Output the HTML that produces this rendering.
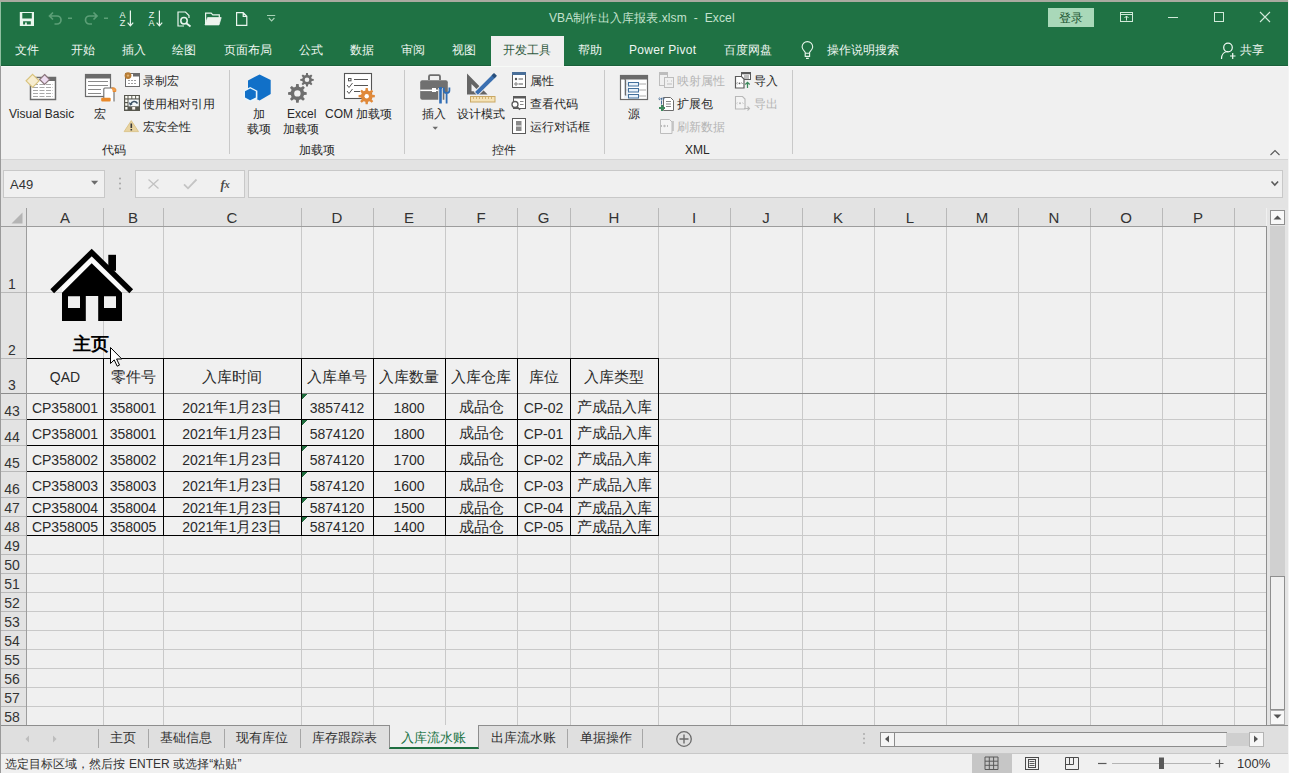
<!DOCTYPE html><html><head><meta charset="utf-8"><title>Excel</title><style>
html,body{margin:0;padding:0;width:1289px;height:773px;overflow:hidden;background:#f0f0f0;font-family:"Liberation Sans",sans-serif;}
.a{position:absolute;white-space:nowrap;line-height:1;}
.ui{font-size:12px;color:#282828;}
.tab{font-size:12px;color:#eef6f1;top:44px;}
.cj{font-size:14.67px;position:relative;top:0;}
.cell{position:absolute;font-size:14px;color:#2a2a2a;text-align:center;display:flex;align-items:center;justify-content:center;white-space:nowrap;}
svg{position:absolute;overflow:visible;}
</style></head><body>
<div class="a" style="left:0;top:0;width:1289px;height:2px;background:#a9aaa0"></div>
<div class="a" style="left:0;top:2px;width:1288px;height:64px;background:#1f7244"></div>
<div class="a" style="left:0;top:2px;width:1px;height:64px;background:#8fbfa0"></div>
<div class="a" style="left:1288px;top:0;width:1px;height:773px;background:#f4f4f4"></div>
<div class="a" style="left:549px;top:12px;font-size:12px;letter-spacing:.12px;color:#c4e2ce">VBA制作出入库报表.xlsm&nbsp; -&nbsp; Excel</div>
<div class="a" style="left:1048px;top:8px;width:46px;height:19px;background:#a9d8b9;"></div>
<div class="a" style="left:1059px;top:12px;font-size:12px;color:#1d5633">登录</div>
<div class="a tab" style="left:15px">文件</div>
<div class="a tab" style="left:71px">开始</div>
<div class="a tab" style="left:122px">插入</div>
<div class="a tab" style="left:172px">绘图</div>
<div class="a tab" style="left:224px">页面布局</div>
<div class="a tab" style="left:299px">公式</div>
<div class="a tab" style="left:350px">数据</div>
<div class="a tab" style="left:401px">审阅</div>
<div class="a tab" style="left:452px">视图</div>
<div class="a tab" style="left:578px">帮助</div>
<div class="a tab" style="left:629px"><span style="letter-spacing:.3px">Power Pivot</span></div>
<div class="a tab" style="left:724px">百度网盘</div>
<div class="a tab" style="left:827px">操作说明搜索</div>
<div class="a tab" style="left:1240px">共享</div>
<div class="a" style="left:491px;top:36px;width:73px;height:30px;background:#f0f0f0"></div>
<div class="a tab" style="left:503px;color:#2f5a3e">开发工具</div>
<div class="a" style="left:1px;top:66px;width:1287px;height:93px;background:#f0f0f0;border-bottom:1px solid #d5d5d5"></div>
<div class="a" style="left:229px;top:70px;width:1px;height:84px;background:#c9c9c9"></div>
<div class="a" style="left:404px;top:70px;width:1px;height:84px;background:#c9c9c9"></div>
<div class="a" style="left:604px;top:70px;width:1px;height:84px;background:#c9c9c9"></div>
<div class="a" style="left:792px;top:70px;width:1px;height:84px;background:#c9c9c9"></div>
<div class="a ui" style="left:9px;top:108px;">Visual Basic</div>
<div class="a ui" style="left:94px;top:108px;">宏</div>
<div class="a ui" style="left:143px;top:75px;">录制宏</div>
<div class="a ui" style="left:143px;top:98px;">使用相对引用</div>
<div class="a ui" style="left:143px;top:121px;">宏安全性</div>
<div class="a ui" style="left:102px;top:144px;">代码</div>
<div class="a ui" style="left:253px;top:108px;">加</div>
<div class="a ui" style="left:247px;top:123px;">载项</div>
<div class="a ui" style="left:287px;top:108px;">Excel</div>
<div class="a ui" style="left:283px;top:123px;">加载项</div>
<div class="a ui" style="left:325px;top:108px;">COM 加载项</div>
<div class="a ui" style="left:299px;top:144px;">加载项</div>
<div class="a ui" style="left:422px;top:108px;">插入</div>
<div class="a ui" style="left:457px;top:108px;">设计模式</div>
<div class="a ui" style="left:530px;top:75px;">属性</div>
<div class="a ui" style="left:530px;top:98px;">查看代码</div>
<div class="a ui" style="left:530px;top:121px;">运行对话框</div>
<div class="a ui" style="left:492px;top:144px;">控件</div>
<div class="a ui" style="left:628px;top:108px;">源</div>
<div class="a ui" style="left:677px;top:98px;">扩展包</div>
<div class="a ui" style="left:754px;top:75px;">导入</div>
<div class="a ui" style="left:685px;top:144px;">XML</div>
<div class="a ui" style="left:677px;top:75px;color:#b4b4b4">映射属性</div>
<div class="a ui" style="left:677px;top:121px;color:#b4b4b4">刷新数据</div>
<div class="a ui" style="left:754px;top:98px;color:#b4b4b4">导出</div>
<div class="a" style="left:1px;top:65px;width:490px;height:1px;background:#1a603a"></div>
<div class="a" style="left:564px;top:65px;width:724px;height:1px;background:#1a603a"></div>
<div class="a" style="left:1px;top:66px;width:1287px;height:1px;background:#f7faf7"></div>
<div class="a" style="left:1px;top:160px;width:1287px;height:48px;background:#e3e3e3"></div>
<div class="a" style="left:3px;top:170px;width:100px;height:26px;background:#f0f0f0;border:1px solid #c8c8c8"></div>
<div class="a" style="left:10px;top:178px;font-size:13px;color:#333">A49</div>
<div class="a" style="left:135px;top:170px;width:108px;height:26px;background:#f0f0f0;border:1px solid #c8c8c8"></div>
<div class="a" style="left:248px;top:170px;width:1033px;height:26px;background:#f0f0f0;border:1px solid #c8c8c8"></div>
<div class="a" style="left:1px;top:208px;width:1265px;height:517px;background:#f0f0f0"></div>
<div class="a" style="left:1px;top:208px;width:1265px;height:18px;background:#e3e3e3"></div>
<div class="a" style="left:1px;top:208px;width:26px;height:517px;background:#e3e3e3"></div>
<svg style="left:0;top:0" width="1289" height="773" shape-rendering="crispEdges"><line x1="103.5" y1="226" x2="103.5" y2="725" stroke="#c9c9c9"/><line x1="103.5" y1="208" x2="103.5" y2="226" stroke="#b9b9b9"/><line x1="163.5" y1="226" x2="163.5" y2="725" stroke="#c9c9c9"/><line x1="163.5" y1="208" x2="163.5" y2="226" stroke="#b9b9b9"/><line x1="301.5" y1="226" x2="301.5" y2="725" stroke="#c9c9c9"/><line x1="301.5" y1="208" x2="301.5" y2="226" stroke="#b9b9b9"/><line x1="373.5" y1="226" x2="373.5" y2="725" stroke="#c9c9c9"/><line x1="373.5" y1="208" x2="373.5" y2="226" stroke="#b9b9b9"/><line x1="445.5" y1="226" x2="445.5" y2="725" stroke="#c9c9c9"/><line x1="445.5" y1="208" x2="445.5" y2="226" stroke="#b9b9b9"/><line x1="517.5" y1="226" x2="517.5" y2="725" stroke="#c9c9c9"/><line x1="517.5" y1="208" x2="517.5" y2="226" stroke="#b9b9b9"/><line x1="570.5" y1="226" x2="570.5" y2="725" stroke="#c9c9c9"/><line x1="570.5" y1="208" x2="570.5" y2="226" stroke="#b9b9b9"/><line x1="658.5" y1="226" x2="658.5" y2="725" stroke="#c9c9c9"/><line x1="658.5" y1="208" x2="658.5" y2="226" stroke="#b9b9b9"/><line x1="730.5" y1="226" x2="730.5" y2="725" stroke="#c9c9c9"/><line x1="730.5" y1="208" x2="730.5" y2="226" stroke="#b9b9b9"/><line x1="802.5" y1="226" x2="802.5" y2="725" stroke="#c9c9c9"/><line x1="802.5" y1="208" x2="802.5" y2="226" stroke="#b9b9b9"/><line x1="874.5" y1="226" x2="874.5" y2="725" stroke="#c9c9c9"/><line x1="874.5" y1="208" x2="874.5" y2="226" stroke="#b9b9b9"/><line x1="946.5" y1="226" x2="946.5" y2="725" stroke="#c9c9c9"/><line x1="946.5" y1="208" x2="946.5" y2="226" stroke="#b9b9b9"/><line x1="1018.5" y1="226" x2="1018.5" y2="725" stroke="#c9c9c9"/><line x1="1018.5" y1="208" x2="1018.5" y2="226" stroke="#b9b9b9"/><line x1="1090.5" y1="226" x2="1090.5" y2="725" stroke="#c9c9c9"/><line x1="1090.5" y1="208" x2="1090.5" y2="226" stroke="#b9b9b9"/><line x1="1162.5" y1="226" x2="1162.5" y2="725" stroke="#c9c9c9"/><line x1="1162.5" y1="208" x2="1162.5" y2="226" stroke="#b9b9b9"/><line x1="1234.5" y1="226" x2="1234.5" y2="725" stroke="#c9c9c9"/><line x1="1234.5" y1="208" x2="1234.5" y2="226" stroke="#b9b9b9"/><line x1="27" y1="292.5" x2="1266" y2="292.5" stroke="#c9c9c9"/><line x1="1" y1="292.5" x2="27" y2="292.5" stroke="#b9b9b9"/><line x1="27" y1="358.5" x2="1266" y2="358.5" stroke="#c9c9c9"/><line x1="1" y1="358.5" x2="27" y2="358.5" stroke="#b9b9b9"/><line x1="27" y1="393.5" x2="1266" y2="393.5" stroke="#c9c9c9"/><line x1="1" y1="393.5" x2="27" y2="393.5" stroke="#b9b9b9"/><line x1="27" y1="419.5" x2="1266" y2="419.5" stroke="#c9c9c9"/><line x1="1" y1="419.5" x2="27" y2="419.5" stroke="#b9b9b9"/><line x1="27" y1="445.5" x2="1266" y2="445.5" stroke="#c9c9c9"/><line x1="1" y1="445.5" x2="27" y2="445.5" stroke="#b9b9b9"/><line x1="27" y1="471.5" x2="1266" y2="471.5" stroke="#c9c9c9"/><line x1="1" y1="471.5" x2="27" y2="471.5" stroke="#b9b9b9"/><line x1="27" y1="497.5" x2="1266" y2="497.5" stroke="#c9c9c9"/><line x1="1" y1="497.5" x2="27" y2="497.5" stroke="#b9b9b9"/><line x1="27" y1="516.5" x2="1266" y2="516.5" stroke="#c9c9c9"/><line x1="1" y1="516.5" x2="27" y2="516.5" stroke="#b9b9b9"/><line x1="27" y1="535.5" x2="1266" y2="535.5" stroke="#c9c9c9"/><line x1="1" y1="535.5" x2="27" y2="535.5" stroke="#b9b9b9"/><line x1="27" y1="554.5" x2="1266" y2="554.5" stroke="#c9c9c9"/><line x1="1" y1="554.5" x2="27" y2="554.5" stroke="#b9b9b9"/><line x1="27" y1="573.5" x2="1266" y2="573.5" stroke="#c9c9c9"/><line x1="1" y1="573.5" x2="27" y2="573.5" stroke="#b9b9b9"/><line x1="27" y1="592.5" x2="1266" y2="592.5" stroke="#c9c9c9"/><line x1="1" y1="592.5" x2="27" y2="592.5" stroke="#b9b9b9"/><line x1="27" y1="611.5" x2="1266" y2="611.5" stroke="#c9c9c9"/><line x1="1" y1="611.5" x2="27" y2="611.5" stroke="#b9b9b9"/><line x1="27" y1="630.5" x2="1266" y2="630.5" stroke="#c9c9c9"/><line x1="1" y1="630.5" x2="27" y2="630.5" stroke="#b9b9b9"/><line x1="27" y1="649.5" x2="1266" y2="649.5" stroke="#c9c9c9"/><line x1="1" y1="649.5" x2="27" y2="649.5" stroke="#b9b9b9"/><line x1="27" y1="668.5" x2="1266" y2="668.5" stroke="#c9c9c9"/><line x1="1" y1="668.5" x2="27" y2="668.5" stroke="#b9b9b9"/><line x1="27" y1="687.5" x2="1266" y2="687.5" stroke="#c9c9c9"/><line x1="1" y1="687.5" x2="27" y2="687.5" stroke="#b9b9b9"/><line x1="27" y1="706.5" x2="1266" y2="706.5" stroke="#c9c9c9"/><line x1="1" y1="706.5" x2="27" y2="706.5" stroke="#b9b9b9"/><line x1="27" y1="725.5" x2="1266" y2="725.5" stroke="#c9c9c9"/><line x1="1" y1="725.5" x2="27" y2="725.5" stroke="#b9b9b9"/><line x1="1" y1="226.5" x2="1266" y2="226.5" stroke="#9d9d9d"/><line x1="1" y1="393.5" x2="1266" y2="393.5" stroke="#8c8c8c"/><line x1="26.5" y1="208" x2="26.5" y2="725" stroke="#9d9d9d"/></svg>
<div class="cell" style="left:27px;top:208px;width:76px;height:18px;font-size:15px;color:#333">A</div>
<div class="cell" style="left:103px;top:208px;width:60px;height:18px;font-size:15px;color:#333">B</div>
<div class="cell" style="left:163px;top:208px;width:138px;height:18px;font-size:15px;color:#333">C</div>
<div class="cell" style="left:301px;top:208px;width:72px;height:18px;font-size:15px;color:#333">D</div>
<div class="cell" style="left:373px;top:208px;width:72px;height:18px;font-size:15px;color:#333">E</div>
<div class="cell" style="left:445px;top:208px;width:72px;height:18px;font-size:15px;color:#333">F</div>
<div class="cell" style="left:517px;top:208px;width:53px;height:18px;font-size:15px;color:#333">G</div>
<div class="cell" style="left:570px;top:208px;width:88px;height:18px;font-size:15px;color:#333">H</div>
<div class="cell" style="left:658px;top:208px;width:72px;height:18px;font-size:15px;color:#333">I</div>
<div class="cell" style="left:730px;top:208px;width:72px;height:18px;font-size:15px;color:#333">J</div>
<div class="cell" style="left:802px;top:208px;width:72px;height:18px;font-size:15px;color:#333">K</div>
<div class="cell" style="left:874px;top:208px;width:72px;height:18px;font-size:15px;color:#333">L</div>
<div class="cell" style="left:946px;top:208px;width:72px;height:18px;font-size:15px;color:#333">M</div>
<div class="cell" style="left:1018px;top:208px;width:72px;height:18px;font-size:15px;color:#333">N</div>
<div class="cell" style="left:1090px;top:208px;width:72px;height:18px;font-size:15px;color:#333">O</div>
<div class="cell" style="left:1162px;top:208px;width:72px;height:18px;font-size:15px;color:#333">P</div>
<div class="a" style="left:0;top:276.5px;width:24px;text-align:center;font-size:14px;color:#333">1</div>
<div class="a" style="left:0;top:342.5px;width:24px;text-align:center;font-size:14px;color:#333">2</div>
<div class="a" style="left:0;top:377.5px;width:24px;text-align:center;font-size:14px;color:#333">3</div>
<div class="a" style="left:0;top:403.5px;width:24px;text-align:center;font-size:14px;color:#333">43</div>
<div class="a" style="left:0;top:429.5px;width:24px;text-align:center;font-size:14px;color:#333">44</div>
<div class="a" style="left:0;top:455.5px;width:24px;text-align:center;font-size:14px;color:#333">45</div>
<div class="a" style="left:0;top:481.5px;width:24px;text-align:center;font-size:14px;color:#333">46</div>
<div class="a" style="left:0;top:500.5px;width:24px;text-align:center;font-size:14px;color:#333">47</div>
<div class="a" style="left:0;top:519.5px;width:24px;text-align:center;font-size:14px;color:#333">48</div>
<div class="a" style="left:0;top:538.5px;width:24px;text-align:center;font-size:14px;color:#333">49</div>
<div class="a" style="left:0;top:557.5px;width:24px;text-align:center;font-size:14px;color:#333">50</div>
<div class="a" style="left:0;top:576.5px;width:24px;text-align:center;font-size:14px;color:#333">51</div>
<div class="a" style="left:0;top:595.5px;width:24px;text-align:center;font-size:14px;color:#333">52</div>
<div class="a" style="left:0;top:614.5px;width:24px;text-align:center;font-size:14px;color:#333">53</div>
<div class="a" style="left:0;top:633.5px;width:24px;text-align:center;font-size:14px;color:#333">54</div>
<div class="a" style="left:0;top:652.5px;width:24px;text-align:center;font-size:14px;color:#333">55</div>
<div class="a" style="left:0;top:671.5px;width:24px;text-align:center;font-size:14px;color:#333">56</div>
<div class="a" style="left:0;top:690.5px;width:24px;text-align:center;font-size:14px;color:#333">57</div>
<div class="a" style="left:0;top:709.5px;width:24px;text-align:center;font-size:14px;color:#333">58</div>
<div class="cell" style="left:27px;top:359.5px;width:76px;height:35px">QAD</div>
<div class="cell" style="left:103px;top:359.5px;width:60px;height:35px"><span class="cj">零件号</span></div>
<div class="cell" style="left:163px;top:359.5px;width:138px;height:35px"><span class="cj">入库时间</span></div>
<div class="cell" style="left:301px;top:359.5px;width:72px;height:35px"><span class="cj">入库单号</span></div>
<div class="cell" style="left:373px;top:359.5px;width:72px;height:35px"><span class="cj">入库数量</span></div>
<div class="cell" style="left:445px;top:359.5px;width:72px;height:35px"><span class="cj">入库仓库</span></div>
<div class="cell" style="left:517px;top:359.5px;width:53px;height:35px"><span class="cj">库位</span></div>
<div class="cell" style="left:570px;top:359.5px;width:88px;height:35px"><span class="cj">入库类型</span></div>
<div class="cell" style="left:27px;top:394.5px;width:76px;height:26px">CP358001</div>
<div class="cell" style="left:103px;top:394.5px;width:60px;height:26px">358001</div>
<div class="cell" style="left:163px;top:394.5px;width:138px;height:26px">2021<span class="cj">年</span>1<span class="cj">月</span>23<span class="cj">日</span></div>
<div class="cell" style="left:301px;top:394.5px;width:72px;height:26px">3857412</div>
<div class="cell" style="left:373px;top:394.5px;width:72px;height:26px">1800</div>
<div class="cell" style="left:445px;top:394.5px;width:72px;height:26px"><span class="cj">成品仓</span></div>
<div class="cell" style="left:517px;top:394.5px;width:53px;height:26px">CP-02</div>
<div class="cell" style="left:570px;top:394.5px;width:88px;height:26px"><span class="cj">产成品入库</span></div>
<div class="cell" style="left:27px;top:420.5px;width:76px;height:26px">CP358001</div>
<div class="cell" style="left:103px;top:420.5px;width:60px;height:26px">358001</div>
<div class="cell" style="left:163px;top:420.5px;width:138px;height:26px">2021<span class="cj">年</span>1<span class="cj">月</span>23<span class="cj">日</span></div>
<div class="cell" style="left:301px;top:420.5px;width:72px;height:26px">5874120</div>
<div class="cell" style="left:373px;top:420.5px;width:72px;height:26px">1800</div>
<div class="cell" style="left:445px;top:420.5px;width:72px;height:26px"><span class="cj">成品仓</span></div>
<div class="cell" style="left:517px;top:420.5px;width:53px;height:26px">CP-01</div>
<div class="cell" style="left:570px;top:420.5px;width:88px;height:26px"><span class="cj">产成品入库</span></div>
<div class="cell" style="left:27px;top:446.5px;width:76px;height:26px">CP358002</div>
<div class="cell" style="left:103px;top:446.5px;width:60px;height:26px">358002</div>
<div class="cell" style="left:163px;top:446.5px;width:138px;height:26px">2021<span class="cj">年</span>1<span class="cj">月</span>23<span class="cj">日</span></div>
<div class="cell" style="left:301px;top:446.5px;width:72px;height:26px">5874120</div>
<div class="cell" style="left:373px;top:446.5px;width:72px;height:26px">1700</div>
<div class="cell" style="left:445px;top:446.5px;width:72px;height:26px"><span class="cj">成品仓</span></div>
<div class="cell" style="left:517px;top:446.5px;width:53px;height:26px">CP-02</div>
<div class="cell" style="left:570px;top:446.5px;width:88px;height:26px"><span class="cj">产成品入库</span></div>
<div class="cell" style="left:27px;top:472.5px;width:76px;height:26px">CP358003</div>
<div class="cell" style="left:103px;top:472.5px;width:60px;height:26px">358003</div>
<div class="cell" style="left:163px;top:472.5px;width:138px;height:26px">2021<span class="cj">年</span>1<span class="cj">月</span>23<span class="cj">日</span></div>
<div class="cell" style="left:301px;top:472.5px;width:72px;height:26px">5874120</div>
<div class="cell" style="left:373px;top:472.5px;width:72px;height:26px">1600</div>
<div class="cell" style="left:445px;top:472.5px;width:72px;height:26px"><span class="cj">成品仓</span></div>
<div class="cell" style="left:517px;top:472.5px;width:53px;height:26px">CP-03</div>
<div class="cell" style="left:570px;top:472.5px;width:88px;height:26px"><span class="cj">产成品入库</span></div>
<div class="cell" style="left:27px;top:498.5px;width:76px;height:19px">CP358004</div>
<div class="cell" style="left:103px;top:498.5px;width:60px;height:19px">358004</div>
<div class="cell" style="left:163px;top:498.5px;width:138px;height:19px">2021<span class="cj">年</span>1<span class="cj">月</span>23<span class="cj">日</span></div>
<div class="cell" style="left:301px;top:498.5px;width:72px;height:19px">5874120</div>
<div class="cell" style="left:373px;top:498.5px;width:72px;height:19px">1500</div>
<div class="cell" style="left:445px;top:498.5px;width:72px;height:19px"><span class="cj">成品仓</span></div>
<div class="cell" style="left:517px;top:498.5px;width:53px;height:19px">CP-04</div>
<div class="cell" style="left:570px;top:498.5px;width:88px;height:19px"><span class="cj">产成品入库</span></div>
<div class="cell" style="left:27px;top:517.5px;width:76px;height:19px">CP358005</div>
<div class="cell" style="left:103px;top:517.5px;width:60px;height:19px">358005</div>
<div class="cell" style="left:163px;top:517.5px;width:138px;height:19px">2021<span class="cj">年</span>1<span class="cj">月</span>23<span class="cj">日</span></div>
<div class="cell" style="left:301px;top:517.5px;width:72px;height:19px">5874120</div>
<div class="cell" style="left:373px;top:517.5px;width:72px;height:19px">1400</div>
<div class="cell" style="left:445px;top:517.5px;width:72px;height:19px"><span class="cj">成品仓</span></div>
<div class="cell" style="left:517px;top:517.5px;width:53px;height:19px">CP-05</div>
<div class="cell" style="left:570px;top:517.5px;width:88px;height:19px"><span class="cj">产成品入库</span></div>
<svg style="left:0;top:0" width="1289" height="773" shape-rendering="crispEdges"><line x1="103.5" y1="358" x2="103.5" y2="536" stroke="#000"/><line x1="163.5" y1="358" x2="163.5" y2="536" stroke="#000"/><line x1="301.5" y1="358" x2="301.5" y2="536" stroke="#000"/><line x1="373.5" y1="358" x2="373.5" y2="536" stroke="#000"/><line x1="445.5" y1="358" x2="445.5" y2="536" stroke="#000"/><line x1="517.5" y1="358" x2="517.5" y2="536" stroke="#000"/><line x1="570.5" y1="358" x2="570.5" y2="536" stroke="#000"/><line x1="658.5" y1="358" x2="658.5" y2="536" stroke="#000"/><line x1="27" y1="358.5" x2="659" y2="358.5" stroke="#000"/><line x1="27" y1="419.5" x2="659" y2="419.5" stroke="#000"/><line x1="27" y1="445.5" x2="659" y2="445.5" stroke="#000"/><line x1="27" y1="471.5" x2="659" y2="471.5" stroke="#000"/><line x1="27" y1="497.5" x2="659" y2="497.5" stroke="#000"/><line x1="27" y1="516.5" x2="659" y2="516.5" stroke="#000"/><line x1="27" y1="535.5" x2="659" y2="535.5" stroke="#000"/><path d="M302 394h5l-5 5z" fill="#1f6b3c"/><path d="M302 420h5l-5 5z" fill="#1f6b3c"/><path d="M302 446h5l-5 5z" fill="#1f6b3c"/><path d="M302 472h5l-5 5z" fill="#1f6b3c"/><path d="M302 498h5l-5 5z" fill="#1f6b3c"/><path d="M302 517h5l-5 5z" fill="#1f6b3c"/></svg>
<div class="a" style="left:73px;top:335px;font-size:18px;font-weight:bold;color:#000">主页</div>
<div class="a" style="left:1267px;top:208px;width:21px;height:517px;background:#e4e4e4"></div>
<div class="a" style="left:1266px;top:226px;width:1px;height:500px;background:#8e8e8e"></div>
<div class="a" style="left:1270px;top:226px;width:15px;height:484px;background:#d0d0d0"></div>
<div class="a" style="left:1270px;top:576px;width:13px;height:132px;background:#f0f0f0;border:1px solid #8f8f8f"></div>
<div class="a" style="left:1270px;top:210px;width:13px;height:13px;background:#f8f8f8;border:1px solid #909090"></div>
<div class="a" style="left:1270px;top:710px;width:13px;height:13px;background:#f8f8f8;border:1px solid #b0b0b0"></div>
<div class="a" style="left:1px;top:725px;width:1287px;height:27px;background:#dfdfdf;border-top:1px solid #8e8e8e;border-bottom:1px solid #c8c8c8"></div>
<div class="a" style="left:880px;top:732px;width:13px;height:13px;background:#f6f6f6;border:1px solid #8c8c8c"></div>
<div class="a" style="left:894px;top:732px;width:331px;height:13px;background:#f0f0f0;border:1px solid #8c8c8c"></div>
<div class="a" style="left:1226px;top:733px;width:23px;height:13px;background:#cfcfcf"></div>
<div class="a" style="left:1249px;top:732px;width:13px;height:13px;background:#f6f6f6;border:1px solid #b4b4b4"></div>
<div class="a" style="left:110px;top:730.5px;font-size:13px;color:#303030">主页</div>
<div class="a" style="left:160px;top:730.5px;font-size:13px;color:#303030">基础信息</div>
<div class="a" style="left:236px;top:730.5px;font-size:13px;color:#303030">现有库位</div>
<div class="a" style="left:312px;top:730.5px;font-size:13px;color:#303030">库存跟踪表</div>
<div class="a" style="left:491px;top:730.5px;font-size:13px;color:#303030">出库流水账</div>
<div class="a" style="left:580px;top:730.5px;font-size:13px;color:#303030">单据操作</div>
<div class="a" style="left:98px;top:729px;width:1px;height:19px;background:#a6a6a6"></div>
<div class="a" style="left:148px;top:729px;width:1px;height:19px;background:#a6a6a6"></div>
<div class="a" style="left:224px;top:729px;width:1px;height:19px;background:#a6a6a6"></div>
<div class="a" style="left:300px;top:729px;width:1px;height:19px;background:#a6a6a6"></div>
<div class="a" style="left:567px;top:729px;width:1px;height:19px;background:#a6a6a6"></div>
<div class="a" style="left:642px;top:729px;width:1px;height:19px;background:#a6a6a6"></div>
<div class="a" style="left:389px;top:725px;width:88px;height:22px;background:#f0f0f0;border-left:1px solid #8e8e8e;border-right:1px solid #8e8e8e;border-bottom:2px solid #1e6e40"></div>
<div class="a" style="left:401px;top:730.5px;font-size:13px;color:#217346">入库流水账</div>
<div class="a" style="left:0;top:66px;width:1px;height:707px;background:#9a9a9a"></div>
<div class="a" style="left:1px;top:754px;width:1287px;height:19px;background:#f0f0f0"></div>
<div class="a" style="left:5px;top:758px;font-size:12px;letter-spacing:.05px;color:#333">选定目标区域，然后按 ENTER 或选择“粘贴”</div>
<div class="a" style="left:972px;top:754px;width:40px;height:19px;background:#c6c6c6"></div>
<div class="a" style="left:1237px;top:757px;font-size:13px;color:#333">100%</div>
<svg style="left:0;top:0;pointer-events:none" width="1289" height="773"><path d="M19.8 12h14.2v13.9h-14.2z M22.3 13.1h9.5v5.3h-9.5z M23.1 21.2h7.7v3.4h-4v-2.1h-1.7v2.1h-2z" fill="#eaf7ee" fill-rule="evenodd"/><path d="M53 12.5l-3.5 3.5 3.5 3.5 M49.5 16h7.5a4 4 0 0 1 0 8h-2.5" fill="none" stroke="#5c9f77" stroke-width="1.7"/><rect x="68" y="17.5" width="4" height="1.5" fill="#5c9f77"/><path d="M93.5 12.5l3.5 3.5-3.5 3.5 M97 16h-7.5a4 4 0 0 0 0 8h2.5" fill="none" stroke="#5c9f77" stroke-width="1.7"/><rect x="104" y="17.5" width="4" height="1.5" fill="#5c9f77"/><text x="119.6" y="17.8" font-family="Liberation Sans" font-size="9" fill="#eaf5ee">A</text><text x="119.8" y="26" font-family="Liberation Sans" font-size="9" fill="#eaf5ee">Z</text><path d="M130.4 10.5v15 M127.6 22.6l2.8 3.2 2.8-3.2" fill="none" stroke="#eaf5ee" stroke-width="1.2"/><text x="148.8" y="17.8" font-family="Liberation Sans" font-size="9" fill="#eaf5ee">Z</text><text x="148.6" y="26" font-family="Liberation Sans" font-size="9" fill="#eaf5ee">A</text><path d="M159.4 10.5v15 M156.6 22.6l2.8 3.2 2.8-3.2" fill="none" stroke="#eaf5ee" stroke-width="1.2"/><path d="M184 26h-6v-14h7.5l3.5 3.5v2.5" fill="none" stroke="#eaf5ee" stroke-width="1.2"/><circle cx="184" cy="20.8" r="3.2" fill="none" stroke="#eaf5ee" stroke-width="1.5"/><path d="M186.3 23.2l4.2 3.3" stroke="#eaf5ee" stroke-width="1.8"/><path d="M205.6 24.5v-11.3h5.6l1.6 1.6h6.5v3" fill="none" stroke="#eaf5ee" stroke-width="1.2"/><path d="M207.6 17.6h13.6l-2.2 7.3h-14z" fill="#eef3ee" stroke="#eaf5ee" stroke-width=".8"/><path d="M236.6 12.7h6.6l3.6 3.6v9h-10.2z M243.2 12.7v3.6h3.6" fill="none" stroke="#eaf5ee" stroke-width="1.2"/><path d="M267 15.5h8.2 M268.8 18l2.8 3 2.8-3" fill="none" stroke="#a8d2b6" stroke-width="1.1"/><rect x="1120.5" y="12.5" width="12" height="9" fill="none" stroke="#d2eada" stroke-width="1"/><path d="M1120.5 14.5h12 M1126.5 20.5v-4.5 M1124.5 18l2-2 2 2" fill="none" stroke="#d2eada"/><path d="M1168 17.5h10" stroke="#d2eada"/><rect x="1214.5" y="12.5" width="9" height="9" fill="none" stroke="#d2eada"/><path d="M1260 12l10 10 M1270 12l-10 10" stroke="#d2eada" stroke-width="1.1"/><path d="M805.2 53.3v-1c-1.6-1.8-3.1-3.3-3.1-5.4a5.3 5.3 0 0 1 10.6 0c0 2.1-1.5 3.6-3.1 5.4v1z M805.2 53.3h4.4v3.1h-4.4z M806 58.4h2.8" fill="none" stroke="#e6f5ea" stroke-width="1.1"/><circle cx="1228" cy="47.5" r="4.3" fill="none" stroke="#f4faf6" stroke-width="1.2"/><path d="M1221.5 59c0-5 3-7.5 6.5-7.5 M1230 56h5.5 M1232.7 53v6" fill="none" stroke="#f4faf6" stroke-width="1.2"/><rect x="30.5" y="77.5" width="25" height="22" fill="#fff" stroke="#6b6b6b" stroke-width="1.5"/><rect x="45" y="77" width="11" height="4" fill="#6b6b6b"/><path d="M33 84.5h20" stroke="#a8a8a8" stroke-dasharray="5 1.5"/><path d="M33 87.5h20" stroke="#a8a8a8" stroke-dasharray="5 1.5"/><path d="M33 90.5h20" stroke="#a8a8a8" stroke-dasharray="5 1.5"/><path d="M33 93.5h20" stroke="#a8a8a8" stroke-dasharray="5 1.5"/><path d="M33 96.5h20" stroke="#a8a8a8" stroke-dasharray="5 1.5"/><path d="M32.6 74.3l6.5 6.5-6.5 6.5-6.5-6.5z" fill="#f7edd0" stroke="#d9c37e" stroke-width="1.2"/><path d="M44.6 74.5l5 5-5 5-5-5z" fill="#eddcf0" stroke="#8a767c" stroke-width="1.2"/><rect x="85.5" y="74.5" width="25" height="22" fill="#fff" stroke="#6b6b6b" stroke-width="1.2"/><rect x="85" y="74" width="26" height="4.5" fill="#6b6b6b"/><path d="M88 81.5h20 M88 85.5h20 M88 89.5h13 M88 93.5h13" stroke="#8a8a8a" stroke-width="1"/><path d="M103.8 100.5v-11.5c0-.6.4-1 1-1h8.2c.6 0 1 .4 1 1v12.5" fill="#fff" stroke="#6b6b6b" stroke-width="1.1"/><path d="M111.5 88h2.5c1 0 1.8.8 1.8 1.8v1.7h-3" fill="#f0a050" stroke="#e8892b" stroke-width="1"/><rect x="101.2" y="97.8" width="9.5" height="3.6" rx="1" fill="#e8892b"/><rect x="125.5" y="73.5" width="14" height="13" fill="#fff" stroke="#6b6b6b"/><rect x="133" y="73" width="7" height="3.5" fill="#6b6b6b"/><path d="M128 80.5h9 M128 83.5h9" stroke="#a0a0a0" stroke-dasharray="2 1"/><circle cx="128" cy="75.6" r="3.4" fill="#b77c34"/><circle cx="128" cy="75.6" r="1.2" fill="#e0b070"/><rect x="124" y="95" width="16" height="16" fill="#57574f"/><rect x="125.2" y="96" width="2.3" height="2.4" fill="#fcfcf6"/><rect x="128.5" y="96" width="2.8" height="2.4" fill="#fcfcf6"/><rect x="132.3" y="96" width="2.8" height="2.4" fill="#fcfcf6"/><rect x="136.1" y="96" width="2.6" height="2.4" fill="#fcfcf6"/><rect x="125.2" y="99.5" width="2.3" height="2.5" fill="#fcfcf6"/><rect x="125.2" y="103.2" width="2.3" height="2.5" fill="#fcfcf6"/><rect x="125.2" y="107" width="2.3" height="2.5" fill="#fcfcf6"/><rect x="128.5" y="99.5" width="10.3" height="6.8" fill="#f4f8fb"/><rect x="132.2" y="107" width="3" height="2.6" fill="#f8f0ec"/><path d="M130.5 104.5c1.5-3.5 5-4 7-1" fill="none" stroke="#3d5266" stroke-width="1.5"/><path d="M128.8 102.3l1.2 3.4 2.8-1.6z" fill="#3d5266"/><path d="M131.3 120.6l7.2 11h-14.4z" fill="#e8d3a0" stroke="#d8bf80" stroke-width=".8"/><path d="M131.3 123.5v4.5 M131.3 129v1.5" stroke="#3a3a3a" stroke-width="1.6"/><path d="M259.6 74.5l11.1 5.6v13.9l-11.1 6.6-11.6-6v-14.2z" fill="#1170c8"/><path d="M250.2 87l7.2 3.8v8l-7.2 3.3-6.8-3.5v-8z" fill="#eaf6fc"/><path d="M250.2 88.5l5.6 2.8v6.2l-5.6 2.8-5.2-2.7v-6.3z" fill="#1170c8"/><polygon points="295.81,86.79 296.15,84.08 298.65,84.08 298.99,86.79 300.95,87.60 303.10,85.93 304.87,87.70 303.20,89.85 304.01,91.81 306.72,92.15 306.72,94.65 304.01,94.99 303.20,96.95 304.87,99.10 303.10,100.87 300.95,99.20 298.99,100.01 298.65,102.72 296.15,102.72 295.81,100.01 293.85,99.20 291.70,100.87 289.93,99.10 291.60,96.95 290.79,94.99 288.08,94.65 288.08,92.15 290.79,91.81 291.60,89.85 289.93,87.70 291.70,85.93 293.85,87.60" fill="#6e6e6e"/><circle cx="297.4" cy="93.4" r="3.2" fill="#f0f0f0"/><polygon points="305.86,75.04 306.09,73.06 307.91,73.06 308.14,75.04 309.56,75.62 311.13,74.39 312.41,75.67 311.18,77.24 311.76,78.66 313.74,78.89 313.74,80.71 311.76,80.94 311.18,82.36 312.41,83.93 311.13,85.21 309.56,83.98 308.14,84.56 307.91,86.54 306.09,86.54 305.86,84.56 304.44,83.98 302.87,85.21 301.59,83.93 302.82,82.36 302.24,80.94 300.26,80.71 300.26,78.89 302.24,78.66 302.82,77.24 301.59,75.67 302.87,74.39 304.44,75.62" fill="#6e6e6e"/><circle cx="307" cy="79.8" r="2.3" fill="#f0f0f0"/><rect x="344.5" y="73.5" width="27" height="25" fill="#fff" stroke="#555" stroke-width="1.1"/><rect x="348.5" y="78.5" width="2.5" height="2.3" fill="none" stroke="#555"/><path d="M354 79.5h14 M354 85.5h14 M354 91.5h6" stroke="#555" stroke-width="1"/><path d="M347 85l2 2.5 3.5-4.5 M347 91l2 2.5 3.5-4.5" fill="none" stroke="#555" stroke-width="1"/><polygon points="365.35,90.56 365.61,88.07 367.79,88.07 368.05,90.56 369.73,91.25 371.67,89.68 373.22,91.23 371.65,93.17 372.34,94.85 374.83,95.11 374.83,97.29 372.34,97.55 371.65,99.23 373.22,101.17 371.67,102.72 369.73,101.15 368.05,101.84 367.79,104.33 365.61,104.33 365.35,101.84 363.67,101.15 361.73,102.72 360.18,101.17 361.75,99.23 361.06,97.55 358.57,97.29 358.57,95.11 361.06,94.85 361.75,93.17 360.18,91.23 361.73,89.68 363.67,91.25" fill="#e0893a"/><circle cx="366.7" cy="96.2" r="2.2" fill="#fff"/><path d="M429 80v-3.5c0-.8.5-1.3 1.3-1.3h8.4c.8 0 1.3.5 1.3 1.3v3.5" fill="none" stroke="#6d6d6d" stroke-width="1.8"/><rect x="420.2" y="80.2" width="27.6" height="19.6" rx="2" fill="#707070"/><rect x="420.2" y="89.6" width="18" height="1.5" fill="#fff"/><rect x="432" y="88" width="4" height="4" fill="#fff"/><path d="M440.5 88v15.5 M446.6 92v11.5" stroke="#f0f0f0" stroke-width="4.5"/><path d="M440.5 88v15.5" stroke="#2f6db5" stroke-width="2.6"/><path d="M443.8 87.5v3c0 1.5 1.2 2.5 2.8 2.5s2.8-1 2.8-2.5v-3 M446.6 92v11.5" fill="none" stroke="#2f6db5" stroke-width="1.8"/><rect x="439" y="87" width="3" height="2" fill="#2f6db5"/><path d="M467 73.6v21h20.6z M471.5 84v7.2h7.2z" fill="#656565" fill-rule="evenodd"/><path d="M475.8 93.8l20.2-19.8" stroke="#f0f0f0" stroke-width="6"/><path d="M476.5 93.3l18.5-18.3" stroke="#3a6fb0" stroke-width="4"/><path d="M493 76.8l2.5-2.5" stroke="#2a4f7a" stroke-width="4"/><rect x="470.5" y="96.5" width="24.5" height="5.5" fill="#f5e2b5" stroke="#c9a864"/><path d="M473.5 97v2" stroke="#c9a864" stroke-width=".8"/><path d="M476.5 97v2" stroke="#c9a864" stroke-width=".8"/><path d="M479.5 97v2" stroke="#c9a864" stroke-width=".8"/><path d="M482.5 97v2" stroke="#c9a864" stroke-width=".8"/><path d="M485.5 97v2" stroke="#c9a864" stroke-width=".8"/><path d="M488.5 97v2" stroke="#c9a864" stroke-width=".8"/><path d="M491.5 97v2" stroke="#c9a864" stroke-width=".8"/><rect x="512.5" y="72.5" width="13" height="15" fill="#fff" stroke="#5a5a5a"/><rect x="512" y="72" width="14" height="3" fill="#4a6f99"/><circle cx="516" cy="79" r="1.2" fill="#555"/><circle cx="516" cy="84" r="1.2" fill="none" stroke="#555" stroke-width=".8"/><path d="M518.5 79h4.5 M518.5 84h4.5" stroke="#555"/><rect x="513.5" y="96.5" width="12" height="12" fill="#fff" stroke="#5a5a5a"/><rect x="513" y="96" width="13" height="2.5" fill="#5a5a5a"/><path d="M520 101.5h3.5 M520 104.5h3.5" stroke="#888"/><circle cx="515" cy="104.5" r="3" fill="#fff" stroke="#5a5a5a" stroke-width="1.3"/><path d="M517 106.8l3 3" stroke="#5a5a5a" stroke-width="1.6"/><rect x="512.5" y="118.5" width="13" height="15" fill="#fff" stroke="#5a5a5a"/><rect x="516" y="121" width="5.5" height="10" fill="#8a8a8a"/><path d="M516 126h5.5" stroke="#fff" stroke-width="1"/><rect x="620.5" y="75.5" width="27" height="24" fill="#fff" stroke="#6b6b6b" stroke-width="1.2"/><rect x="620" y="75" width="28" height="4.5" fill="#6b6b6b"/><path d="M625 79v16 M625 84h3 M625 90h3 M625 95h3" fill="none" stroke="#6b6b6b"/><rect x="624" y="80" width="5" height="18" fill="#e3eef8" opacity=".8"/><path d="M625.5 79.5v16" stroke="#6b6b6b" stroke-width="1.2"/><rect x="628.5" y="82.5" width="10" height="3.5" fill="#e8f2fb" stroke="#43709c" stroke-width="1"/><path d="M639 84h7" stroke="#aaa"/><rect x="628.5" y="88.5" width="10" height="3.5" fill="#e8f2fb" stroke="#43709c" stroke-width="1"/><path d="M639 90h7" stroke="#aaa"/><rect x="628.5" y="94.5" width="10" height="3.5" fill="#e8f2fb" stroke="#43709c" stroke-width="1"/><path d="M639 96h7" stroke="#aaa"/><rect x="659.5" y="72.5" width="8" height="13" fill="none" stroke="#bdbdbd"/><rect x="659" y="72" width="9" height="3" fill="#bdbdbd"/><rect x="664.5" y="77.5" width="9" height="10" fill="#f0f0f0" stroke="#bdbdbd"/><path d="M667 81h1 M671 81h1 M667 84h5" stroke="#bdbdbd"/><path d="M663.5 97.5h7l3 3v10h-10z" fill="#fff" stroke="#6b6b6b" stroke-width="1"/><path d="M666 101.5h5 M666 104h5 M666 106.5h5" stroke="#6b6b6b" stroke-width=".8"/><path d="M660 97.5l-1.3 1.3 1.3 1.3 M663 97.5l1.3 1.3-1.3 1.3" fill="none" stroke="#4a6f99" stroke-width=".9"/><circle cx="661.5" cy="98.8" r="1.1" fill="#4a6f99"/><path d="M661.5 100.5v4" stroke="#4a6f99"/><path d="M659 108h6 M662 105v6" stroke="#3c8a5c" stroke-width="2"/><path d="M660.5 119.5h9l2.5 2.5v11.5h-11.5z" fill="#f4f4f4" stroke="#bdbdbd"/><path d="M662 125l-1 1 1 1 M667 125l1 1-1 1" fill="none" stroke="#bdbdbd"/><circle cx="664.5" cy="126" r="1.2" fill="#bdbdbd"/><path d="M673 121v10" stroke="#bdbdbd" stroke-width="1.5"/><rect x="741.5" y="72.5" width="9" height="7" fill="#fff" stroke="#5a5a5a"/><rect x="741" y="72" width="10" height="2.3" fill="#5a5a5a"/><path d="M744 76h5 M744 78h5" stroke="#5a5a5a" stroke-width=".8"/><path d="M735.5 76.5h6l2.5 2.5v9h-8.5z" fill="#fff" stroke="#5a5a5a" stroke-width="1.2"/><path d="M737.5 82.5l-.8.8.8.8 M741.5 82.5l.8.8-.8.8" fill="none" stroke="#5a5a5a" stroke-width=".8"/><circle cx="739.5" cy="83.3" r=".9" fill="#5a5a5a"/><path d="M747.5 88v-5.5 M745.3 84.5l2.2-2.2 2.2 2.2" fill="none" stroke="#3c8a5c" stroke-width="1.2"/><path d="M735.5 96.5h7l2.5 2.5v10h-9.5z" fill="#f4f4f4" stroke="#b8b8b8" stroke-width="1.1"/><path d="M737.5 102.5l-.8.8.8.8 M742.5 102.5l.8.8-.8.8" fill="none" stroke="#b8b8b8" stroke-width=".8"/><circle cx="740" cy="103.3" r="1" fill="#b8b8b8"/><path d="M744 108.5h5 M747.5 106.5l2 2-2 2" fill="none" stroke="#b8b8b8" stroke-width="1.1"/><path d="M432.5 126.7h5.5l-2.75 3z" fill="#6b6b6b"/><path d="M1270.5 155l4.5-4.5 4.5 4.5" fill="none" stroke="#5a5a5a" stroke-width="1.1"/><path d="M91 180.8h7.2l-3.6 4z" fill="#6b6b6b"/><circle cx="120" cy="178.5" r=".9" fill="#a0a0a0"/><circle cx="120" cy="183.5" r=".9" fill="#a0a0a0"/><circle cx="120" cy="188.5" r=".9" fill="#a0a0a0"/><path d="M148.5 179.5l10 9 M158.5 179.5l-10 9" stroke="#c2c2c2" stroke-width="1.3"/><path d="M184 184.3l4 4 8.5-8.8" fill="none" stroke="#c4c4c4" stroke-width="1.8"/><text x="220.5" y="188.6" font-size="12.5" font-style="italic" font-weight="bold" fill="#4a4a4a" font-family="Liberation Serif">f</text><text x="224.6" y="188.3" font-size="10.5" font-style="italic" font-weight="bold" fill="#4a4a4a" font-family="Liberation Serif">x</text><path d="M1271.5 181.5l3.3 3.5 3.3-3.5" fill="none" stroke="#5a5a5a" stroke-width="1.6"/><path d="M22.5 212.5v11h-11z" fill="#b4b4b4"/><path d="M91.7 256.4L122 286.7v6.9L91.7 263.3 62 293.6v-6.9z" fill="#fbfbfb"/><path d="M52.2 291.2l39.5-38.7 39.5 38.7" fill="none" stroke="#000" stroke-width="5.4" stroke-linejoin="miter" stroke-miterlimit="10"/><rect x="108.3" y="254.8" width="7.7" height="16" fill="#000"/><path d="M91.7 263.3l30.3 29.5v28.2h-23.8v-25h-12.4v25h-23.8v-28.2z M68 296.2v11.8h12v-11.8z M104 296.2v11.8h12v-11.8z" fill="#000" fill-rule="evenodd"/><path d="M110.5 347.5v16l3.7-3.6 3 6.3 2.3-1.1-2.9-6.1h5.2z" fill="#fff" stroke="#000" stroke-width="1"/><path d="M1273.5 219.5h8l-4-4z" fill="#555"/><path d="M1273.5 714.5h8l-4 4z" fill="#555"/><path d="M29 735.5v7l-3.5-3.5z" fill="#bdbdbd"/><path d="M53 735.5v7l3.5-3.5z" fill="#bdbdbd"/><circle cx="684" cy="739" r="7.3" fill="none" stroke="#6b6b6b" stroke-width="1.3"/><path d="M684 734.5v9 M679.5 739h9" stroke="#6b6b6b" stroke-width="1.4"/><path d="M889 735.5v7l-4-3.5z" fill="#555"/><path d="M1254 735.5v7l4-3.5z" fill="#555"/><circle cx="864" cy="734" r=".9" fill="#a6a6a6"/><circle cx="864" cy="738.5" r=".9" fill="#a6a6a6"/><circle cx="864" cy="743" r=".9" fill="#a6a6a6"/><path d="M985 757h13v12.5h-13z M985 761.2h13 M985 765.3h13 M989.3 757v12.5 M993.6 757v12.5" fill="none" stroke="#5a5a5a" stroke-width="1"/><rect x="1025.5" y="757.5" width="13" height="12" fill="none" stroke="#4a4a4a"/><rect x="1028.5" y="759.5" width="7" height="8" fill="none" stroke="#4a4a4a"/><path d="M1029.5 761.5h5 M1029.5 763.5h5 M1029.5 765.5h5" stroke="#4a4a4a" stroke-width=".9"/><path d="M1065.5 757.5h13v12h-13z M1069.5 757.5v7 M1073.5 757.5v7h-8" fill="none" stroke="#4a4a4a"/><path d="M1098 763.5h8.5" stroke="#5a5a5a" stroke-width="1.2"/><path d="M1112 763.5h99" stroke="#b4b4b4"/><rect x="1159" y="757.5" width="5" height="11.5" fill="#5a5a5a"/><path d="M1215.5 763.5h8 M1219.5 759.5v8" stroke="#5a5a5a" stroke-width="1.2"/></svg>
</body></html>
